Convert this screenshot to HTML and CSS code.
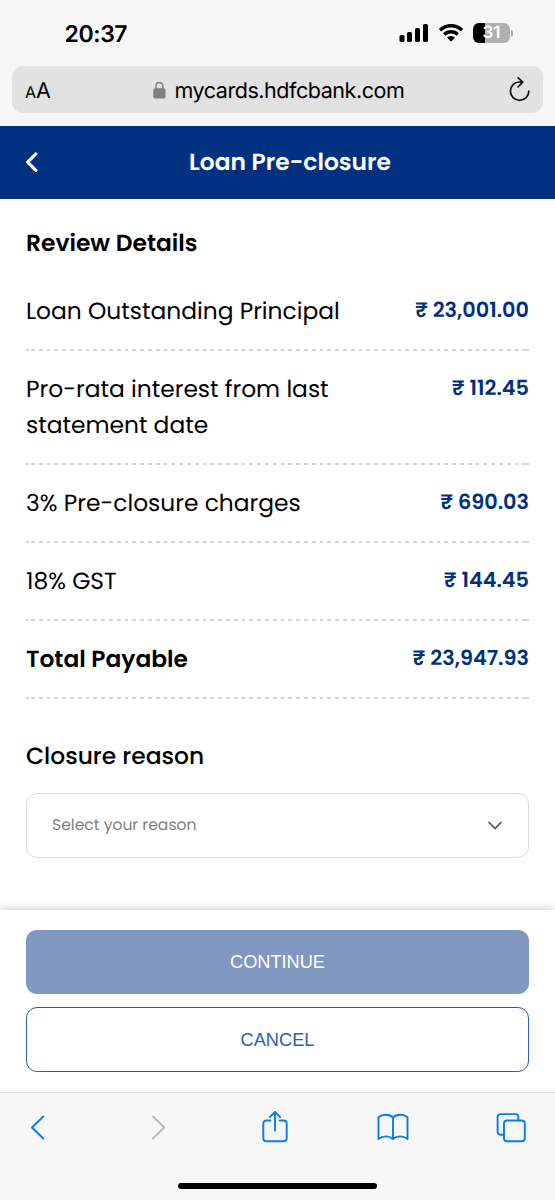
FILE: index.html
```html
<!DOCTYPE html>
<html lang="en">
<head>
    <meta charset="UTF-8">
    <meta name="viewport" content="width=device-width, initial-scale=1.0">
    <title>Loan Pre-closure</title>
    <link rel="stylesheet" href="styles.css">
</head>
<body>
    <div class="browser-top">
        <div class="status-bar">
            <span class="time">20:37</span>
            <div class="status-icons">
                <svg width="30" height="20" viewBox="0 0 30 20">
                    <rect x="0.5" y="12" width="5" height="7" rx="1.5"/>
                    <rect x="8" y="9" width="5" height="10" rx="1.5"/>
                    <rect x="16" y="5" width="5" height="14" rx="1.5"/>
                    <rect x="24" y="1" width="5" height="18" rx="1.5"/>
                </svg>
                <svg class="wifi" width="26" height="20" viewBox="0 0 26 20">
                    <path d="M2 7.2a15.8 15.8 0 0 1 22 0M6.2 11.5a9.8 9.8 0 0 1 13.6 0" fill="none" stroke="#000" stroke-width="3.3"/>
                    <path d="M9 14.6a5.6 5.6 0 0 1 8 0L13 18.7z"/>
                </svg>
                <span class="battery">31</span>
                <span class="battery-tip"></span>
            </div>
        </div>
        <div class="address-bar">
            <span class="text-size"><small>A</small>A</span>
            <div class="url">
                <svg width="13" height="18" viewBox="0 0 13 18">
                    <rect x="0.3" y="6.3" width="12.2" height="10.2" rx="1.8" fill="#808083"/>
                    <path d="M3 7V3.8a3.4 3.4 0 0 1 6.8 0V7" fill="none" stroke="#808083" stroke-width="1.5"/>
                </svg>
                <span>mycards.hdfcbank.com</span>
            </div>
            <svg width="22" height="26" viewBox="0 0 22 26" fill="none" stroke="#111" stroke-width="1.7" stroke-linecap="round" stroke-linejoin="round">
                <path d="M13 5h-2.4a9.2 9.2 0 1 0 9.2 9.2M9.2.9l4.6 4.2L9 9.8"/>
            </svg>
        </div>
    </div>

    <header class="page-header">
        <svg width="14" height="22" viewBox="0 0 14 22" fill="none" stroke="#fff" stroke-width="3.2" stroke-linecap="round" stroke-linejoin="round">
            <path d="M11.8 3L3.7 11.2l8.1 8.2"/>
        </svg>
        <h1>Loan Pre-closure</h1>
    </header>

    <main class="content">
        <h2>Review Details</h2>
        <ul class="details">
            <li>
                <span class="label">Loan Outstanding Principal</span>
                <span class="amount">₹ 23,001.00</span>
            </li>
            <li>
                <span class="label">Pro-rata interest from last<br>statement date</span>
                <span class="amount">₹ 112.45</span>
            </li>
            <li>
                <span class="label">3% Pre-closure charges</span>
                <span class="amount">₹ 690.03</span>
            </li>
            <li>
                <span class="label">18% GST</span>
                <span class="amount">₹ 144.45</span>
            </li>
            <li>
                <span class="label total">Total Payable</span>
                <span class="amount">₹ 23,947.93</span>
            </li>
        </ul>

        <h3>Closure reason</h3>
        <div class="select">
            <span>Select your reason</span>
            <svg width="16" height="12" viewBox="0 0 16 12" fill="none" stroke="#666" stroke-width="2" stroke-linecap="round" stroke-linejoin="round">
                <path d="M2.2 2.6L8 8.6l5.8-6"/>
            </svg>
        </div>
    </main>

    <div class="actions">
        <button class="btn btn-primary">CONTINUE</button>
        <button class="btn btn-outline">CANCEL</button>
    </div>

    <footer class="browser-bottom">
        <nav class="toolbar">
            <svg width="32" height="34" viewBox="0 0 32 34">
                <path d="M21.3 6.5L10 17.5l11.3 11"/>
            </svg>
            <svg class="disabled" width="32" height="34" viewBox="0 0 32 34">
                <path d="M13 6.5l11.3 11L13 28.5"/>
            </svg>
            <svg width="32" height="34" viewBox="0 0 32 34">
                <path d="M11.5 10.500H7.300a3 3 0 0 0-3 3v14.700a3 3 0 0 0 3 3h17.400a3 3 0 0 0 3-3V13.500a3 3 0 0 0-3-3H20.500M16 20.500V2.200M10.800 7.200L16 2l5.200 5.200"/>
            </svg>
            <svg width="32" height="34" viewBox="0 0 32 34">
                <path d="M16 7.500C12.500 3.800 5.500 3.800 1.500 7.200V29c4.500-3.500 10.500-3.500 14.500 0 4-3.500 10-3.500 14.500 0V7.200C26.500 3.800 19.500 3.800 16 7.500zM16 7.500v21.500"/>
            </svg>
            <svg width="32" height="34" viewBox="0 0 32 34">
                <rect x="9" y="10.5" width="20.8" height="20.8" rx="3"/>
                <path d="M9 24.8H5.6a3 3 0 0 1-3-3V7.1a3 3 0 0 1 3-3h14.7a3 3 0 0 1 3 3v3.4"/>
            </svg>
        </nav>
        <div class="home-indicator"></div>
    </footer>
</body>
</html>
```
FILE: styles.css
```css
* {
    margin: 0;
    padding: 0;
    box-sizing: border-box;
}

body {
    width: 555px;
    height: 1200px;
    display: flex;
    flex-direction: column;
    font-family: 'Poppins', 'Inter', sans-serif;
    text-rendering: geometricPrecision;
    color: #000;
    background: #fff;
    overflow: hidden;
}

svg {
    display: block;
    flex-shrink: 0;
}

/* Safari top */
.browser-top {
    height: 126px;
    background: #f7f7f7;
    padding: 0 12px;
    font-family: 'Inter', sans-serif;
}

.status-bar {
    height: 66px;
    padding: 0 30px 0 52.5px;
    display: flex;
    justify-content: space-between;
    align-items: center;
}

.time {
    padding-top: 1px;
    font-size: 23px;
    font-weight: 600;
    letter-spacing: -0.4px;
}

.status-icons {
    display: flex;
    align-items: center;
}

.wifi {
    margin: 0 9px 0 9px;
}

.battery {
    width: 37px;
    height: 20px;
    border-radius: 6px;
    background: linear-gradient(to right, #000 12px, #b0b0b0 12px);
    color: #fff;
    font-size: 17px;
    font-weight: 600;
    line-height: 20px;
    text-align: center;
}

.battery-tip {
    width: 2px;
    height: 7px;
    margin-left: 1px;
    border-radius: 0 3px 3px 0;
    background: #b0b0b0;
}

.address-bar {
    height: 47px;
    padding: 0 12px 0 13px;
    border-radius: 11px;
    background: #e2e2e2;
    display: flex;
    justify-content: space-between;
    align-items: center;
}

.text-size {
    padding-top: 2px;
    font-size: 21.5px;
}

.text-size small {
    font-size: 16px;
}

.url {
    display: flex;
    align-items: center;
    gap: 9px;
    padding: 2px 3px 0 0;
    font-size: 21.5px;
    letter-spacing: -0.45px;
}

/* Page header */
.page-header {
    height: 73px;
    padding: 0 24px 1px;
    background: #003180;
    color: #fff;
    display: grid;
    grid-template-columns: 14px 1fr;
    align-items: center;
}

.page-header h1 {
    font-size: 23.4px;
    font-weight: 600;
    text-align: center;
    padding-left: 11px;
}

/* Details */
.content {
    flex: 1;
    padding: 26px 26px 0;
}

.content h2 {
    font-size: 23.4px;
    font-weight: 600;
    line-height: 37px;
}

.details {
    list-style: none;
    padding-top: 11.5px;
}

.details li {
    display: flex;
    justify-content: space-between;
    padding: 20.9px 0 21px;
    background:
        linear-gradient(#d3d3d3, #d3d3d3) left bottom / 3px 2px no-repeat,
        linear-gradient(#d3d3d3, #d3d3d3) right bottom / 3px 2px no-repeat,
        repeating-linear-gradient(to right, transparent 0 4px, #d3d3d3 4px 7.8px) 0.6px bottom / calc(100% - 4.5px) 2px no-repeat;
}

.label {
    font-size: 23.35px;
    line-height: 36px;
}

.total {
    font-weight: 600;
}

.amount {
    color: #003180;
    font-size: 20.8px;
    font-weight: 600;
    line-height: 33.5px;
}

.content h3 {
    margin-top: 39.5px;
    font-size: 23.4px;
    font-weight: 500;
    line-height: 37px;
}

.select {
    height: 65px;
    margin-top: 17.5px;
    padding: 1px 25px 0;
    border: 1.5px solid #dcdcdc;
    border-radius: 11px;
    display: flex;
    justify-content: space-between;
    align-items: center;
    color: #808080;
    font-size: 15.6px;
}

/* Buttons */
.actions {
    height: 182px;
    padding: 19.6px 26px 0;
    background: #fff;
    box-shadow: 0 -3px 8px rgba(0, 0, 0, 0.15);
    display: flex;
    flex-direction: column;
    gap: 13px;
}

.btn {
    height: 64.6px;
    padding-top: 2px;
    border: none;
    border-radius: 11px;
    font-family: 'Liberation Sans', Arial, sans-serif;
    font-size: 18.2px;
}

.btn-primary {
    background: #8097bf;
    color: #fff;
}

.btn-outline {
    background: #fff;
    border: 1.5px solid #2b5cb8;
    color: #2b5cb8;
}

/* Safari bottom */
.browser-bottom {
    height: 108px;
    border-top: 1px solid #dedede;
    background: #f7f7f7;
}

.toolbar {
    height: 68px;
    padding: 0 28px 0 22px;
    display: flex;
    justify-content: space-between;
    align-items: center;
}

.toolbar svg {
    fill: none;
    stroke: #0a7af0;
    stroke-width: 1.9;
    stroke-linecap: round;
    stroke-linejoin: round;
}

.toolbar .disabled {
    stroke: #b9b9b9;
}

.home-indicator {
    width: 199px;
    height: 6px;
    margin: 22px auto 0;
    border-radius: 3px;
    background: #000;
}
```
